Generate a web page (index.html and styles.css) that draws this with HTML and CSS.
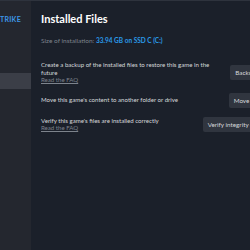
FILE: index.html
```html
<!DOCTYPE html>
<html>
  <head>
    <title>Installed Files</title>
    <link rel="stylesheet" href="styles.css">
  </head>
  <body>
    <div class="app">
      <div class="sidebar">
        <div class="game-title"><span>COUNTER-STRIKE</span></div>
        <div class="nav-item"></div>
        <div class="nav-item active"></div>
      </div>
      <div class="main">
        <h1>Installed Files</h1>
        <div class="size">Size of installation: <span class="size-value">33.94 GB on SSD C (C:)</span></div>
        <div class="row">
          <div class="row-text">
            Create a backup of the installed files to restore this game in the future
            <a href="#" class="faq">Read the FAQ</a>
          </div>
          <button class="btn">Backup game files</button>
        </div>
        <div class="row">
          <div class="row-text">Move this game's content to another folder or drive</div>
          <button class="btn">Move install folder</button>
        </div>
        <div class="row">
          <div class="row-text">
            Verify this game's files are installed correctly
            <a href="#" class="faq">Read the FAQ</a>
          </div>
          <button class="btn">Verify integrity of game files</button>
        </div>
      </div>
    </div>
  </body>
</html>
```

FILE: styles.css
```css
* {
  box-sizing: border-box;
}
body {
  margin: 0;
  padding: 0;
  width: 250px;
  height: 250px;
  overflow: hidden;
  background-color: #1b202a;
  font-family: Lato, "Noto Sans", Arial, sans-serif;
}
.app {
  display: flex;
  width: 300px;
  height: 250px;
  border-top: 1px solid #2e333d;
}
.sidebar {
  width: 31px;
  flex-shrink: 0;
  background-color: #24272f;
}
.game-title {
  display: flex;
  justify-content: flex-end;
  padding: 14px 10px 0 0;
  height: 30px;
  white-space: nowrap;
  font-size: 7px;
  font-weight: bold;
  color: #3d96e6;
  letter-spacing: 0.3px;
}
.nav-item {
  height: 42px;
}
.nav-item.active {
  height: 16px;
  background-color: #3b3e47;
}
.main {
  flex: 1;
  padding: 10px 10px 0 10px;
}
h1 {
  margin: 0;
  font-size: 11px;
  font-weight: bold;
  color: #ffffff;
  line-height: 16px;
}
.size {
  margin-top: 10px;
  font-size: 6.5px;
  color: #7d828a;
}
.size-value {
  color: #2a9ae8;
  font-weight: bold;
}
.row {
  display: flex;
  align-items: center;
  justify-content: space-between;
  margin-top: 17px;
}
.row + .row {
  margin-top: 9px;
}
.row-text {
  width: 182px;
  font-size: 6.1px;
  line-height: 7.5px;
  color: #d6d8db;
}
.faq {
  display: block;
  color: #7d838c;
  text-decoration: underline;
}
.btn {
  flex-shrink: 0;
  height: 15px;
  padding: 0 5px;
  border: none;
  border-radius: 2px;
  background-color: #30353f;
  color: #d6d8db;
  font-family: Lato, "Noto Sans", Arial, sans-serif;
  font-size: 6.3px;
}
```
